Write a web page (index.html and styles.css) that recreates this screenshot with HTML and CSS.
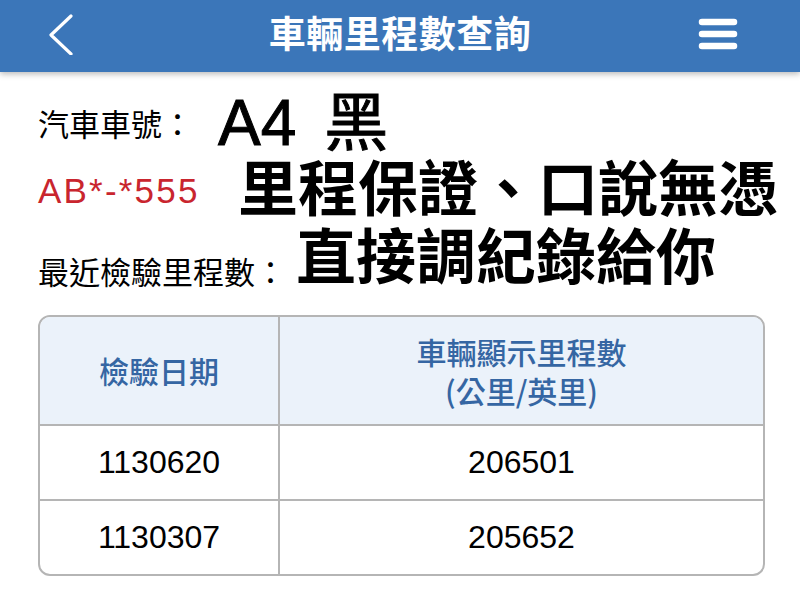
FILE: index.html
```html
<!DOCTYPE html>
<html lang="zh-Hant">
<head>
<meta charset="utf-8">
<title>車輛里程數查詢</title>
<link rel="stylesheet" href="styles.css">
</head>
<body>
<header class="topbar">
  <span class="back" aria-label="返回">
    <svg width="34" height="44" viewBox="0 0 34 44"><polyline points="27,5 7,24 27,43" fill="none" stroke="#fff" stroke-width="3.2" stroke-linecap="round" stroke-linejoin="round"/></svg>
  </span>
  <h1 class="title">車輛里程數查詢</h1>
  <span class="menu" aria-label="選單">
    <svg width="40" height="34" viewBox="0 0 40 34"><g stroke="#fff" stroke-width="6.5" stroke-linecap="round"><line x1="4" y1="5" x2="36" y2="5"/><line x1="4" y1="17" x2="36" y2="17"/><line x1="4" y1="29" x2="36" y2="29"/></g></svg>
  </span>
</header>
<main class="content">
  <section class="info">
    <div class="row row-center">
      <span class="label">汽車車號：</span>
      <span class="big big-plate">A4<span class="gap"></span>黑</span>
    </div>
    <div class="row row-center">
      <span class="plate">AB*-*555</span>
      <span class="big big-2">里程保證、口說無憑</span>
    </div>
    <div class="row row-end">
      <span class="label label-end">最近檢驗里程數：</span>
      <span class="big big-3">直接調紀錄給你</span>
    </div>
  </section>
  <table class="records">
    <thead>
      <tr>
        <th class="col-date">檢驗日期</th>
        <th class="col-km"><span class="th-line">車輛顯示里程數</span><span class="th-line">(公里/英里)</span></th>
      </tr>
    </thead>
    <tbody>
      <tr><td>1130620</td><td>206501</td></tr>
      <tr><td>1130307</td><td>205652</td></tr>
    </tbody>
  </table>
</main>
</body>
</html>
```
FILE: styles.css
```css
* { box-sizing: border-box; }
html, body { margin: 0; padding: 0; background: #ffffff; }
body {
  width: 800px;
  height: 600px;
  overflow: hidden;
  font-family: "Liberation Sans", "Noto Sans CJK TC", sans-serif;
  color: #000;
}
.topbar {
  height: 72px;
  background: #3b76b9;
  display: grid;
  grid-template-columns: 1fr auto 1fr;
  align-items: center;
  padding: 0 62px 0 44px;
  box-shadow: 0 2px 6px rgba(0,0,0,0.28);
  position: relative;
  z-index: 1;
}
.back { display: flex; width: 34px; height: 44px; margin-top: -6px; justify-self: start; }
.menu { display: flex; width: 40px; height: 34px; margin-top: -4px; justify-self: end; }
.title {
  margin: 0 0 8px 0;
  color: #fff;
  font-family: "Noto Sans CJK TC", sans-serif;
  font-weight: 700;
  font-size: 37px;
  line-height: 1;
  letter-spacing: 0.5px;
  transform: translateX(9px);
}
.content { padding: 17px 35px 0 38px; }
.info { display: flex; flex-direction: column; }
.row { display: flex; height: 68px; white-space: nowrap; }
.row-center { align-items: center; }
.row-end { align-items: flex-end; }
.label {
  font-family: "Noto Sans CJK TC", sans-serif;
  font-size: 31px;
  line-height: 40px;
  width: 180px;
  flex-shrink: 0;
}
.label-end { width: auto; margin-bottom: 2px; margin-right: 10px; }
.big {
  font-family: "Liberation Sans", "Noto Sans CJK TC", sans-serif;
  font-weight: 700;
  font-size: 60px;
  line-height: 68px;
  white-space: nowrap;
}
.big-plate { font-size: 64px; font-weight: 400; -webkit-text-stroke: 1px #000; }
.gap { display: inline-block; width: 28px; }
.plate {
  color: #c9252e;
  font-size: 35px;
  line-height: 40px;
  letter-spacing: 2.2px;
  width: 200px;
  flex-shrink: 0;
  white-space: nowrap;
}
.big-2 { margin-left: 0; }
.big-3 { margin-left: 0; }
.records {
  margin-top: 22px;
  width: 727px;
  border-collapse: separate;
  border-spacing: 0;
  border: 2px solid #b5b5b5;
  border-radius: 12px;
  overflow: hidden;
  table-layout: fixed;
}
.records th, .records td {
  text-align: center;
  padding: 0;
}
.records th {
  background: #ebf2fa;
  color: #3566a3;
  font-family: "Noto Sans CJK TC", sans-serif;
  font-weight: 500;
  font-size: 30px;
  line-height: 39px;
  height: 107px;
}
.th-line { display: block; }
.records td {
  font-size: 32px;
  height: 75px;
  border-top: 2px solid #b5b5b5;
}
.records th:first-child, .records td:first-child {
  border-right: 2px solid #b5b5b5;
}
.col-date { width: 240px; }
```
